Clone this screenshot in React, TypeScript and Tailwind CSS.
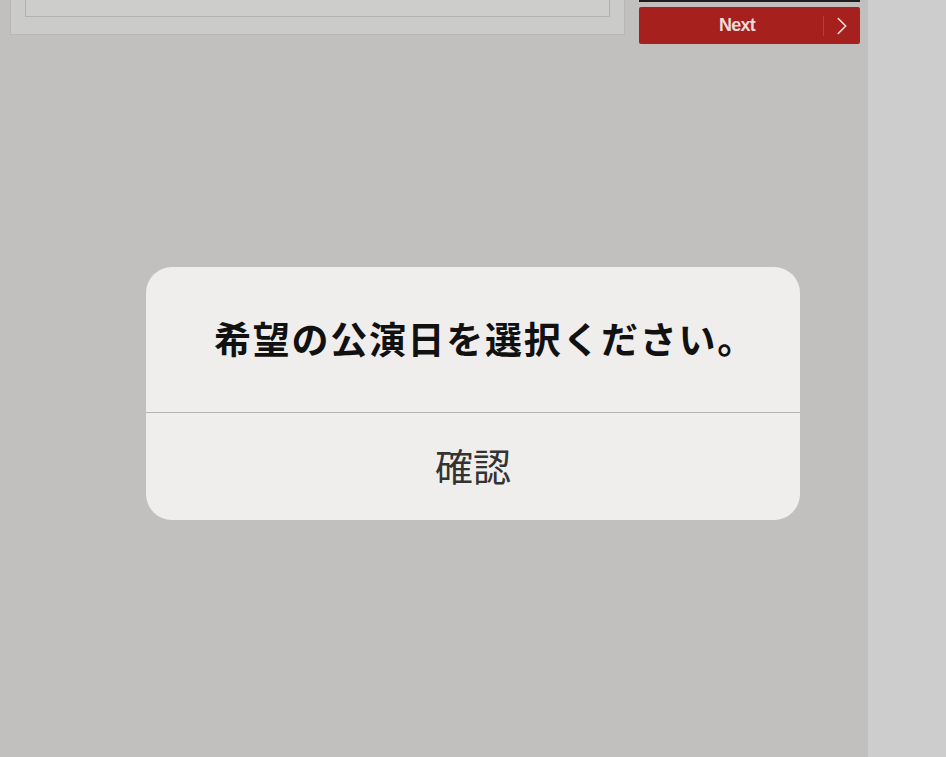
import { ChevronRight } from 'lucide-react';

export default function App() {
  return (
    <div
      className="flex h-[757px] w-[946px] overflow-hidden bg-[#cdcdcd]"
      style={{ fontFamily: '"Noto Sans CJK JP", "Noto Sans", sans-serif' }}
    >
      {/* page under the overlay */}
      <div className="relative flex h-full w-[868px] items-start gap-[14px] bg-[#c1c0be] pl-[10px]">
        <div className="mt-[-20px] h-[55px] w-[615px] border border-[#b9b8b6] bg-[#cbcbca] px-[14px]">
          <div className="h-[36px] border border-[#b3b2b0] bg-[#cdcdcc]" />
        </div>

        <div className="flex w-[221px] flex-col">
          <div className="h-[2px] bg-[#1d1d1d]" />
          <button className="mt-[5px] flex h-[37px] items-center rounded-[2px] bg-[#a6201d] text-[#efd9d7]">
            <span
              className="flex-1 pl-[12px] text-center text-[18px] font-bold tracking-[-0.8px]"
              style={{ fontFamily: '"Liberation Sans", Arial, sans-serif' }}
            >
              Next
            </span>
            <span className="h-[20px] w-px bg-[#b53f3b]" />
            <ChevronRight size={30} strokeWidth={1.3} className="mx-[3px] text-[#f2dcda]" />
          </button>
        </div>

        {/* alert */}
        <div className="absolute left-[146px] top-[267px] flex h-[253px] w-[654px] flex-col overflow-hidden rounded-[26px] bg-[#efeeed]">
          <div className="flex h-[146px] items-center justify-center border-b border-[#b5b4b3] pb-[2px] pl-[24px]">
            <p className="text-[37px] font-bold tracking-[1.7px] text-[#111]">希望の公演日を選択ください。</p>
          </div>
          <button className="flex flex-1 items-center justify-center pb-[4px] text-[38px] text-[#333]">
            確認
          </button>
        </div>
      </div>
    </div>
  );
}
